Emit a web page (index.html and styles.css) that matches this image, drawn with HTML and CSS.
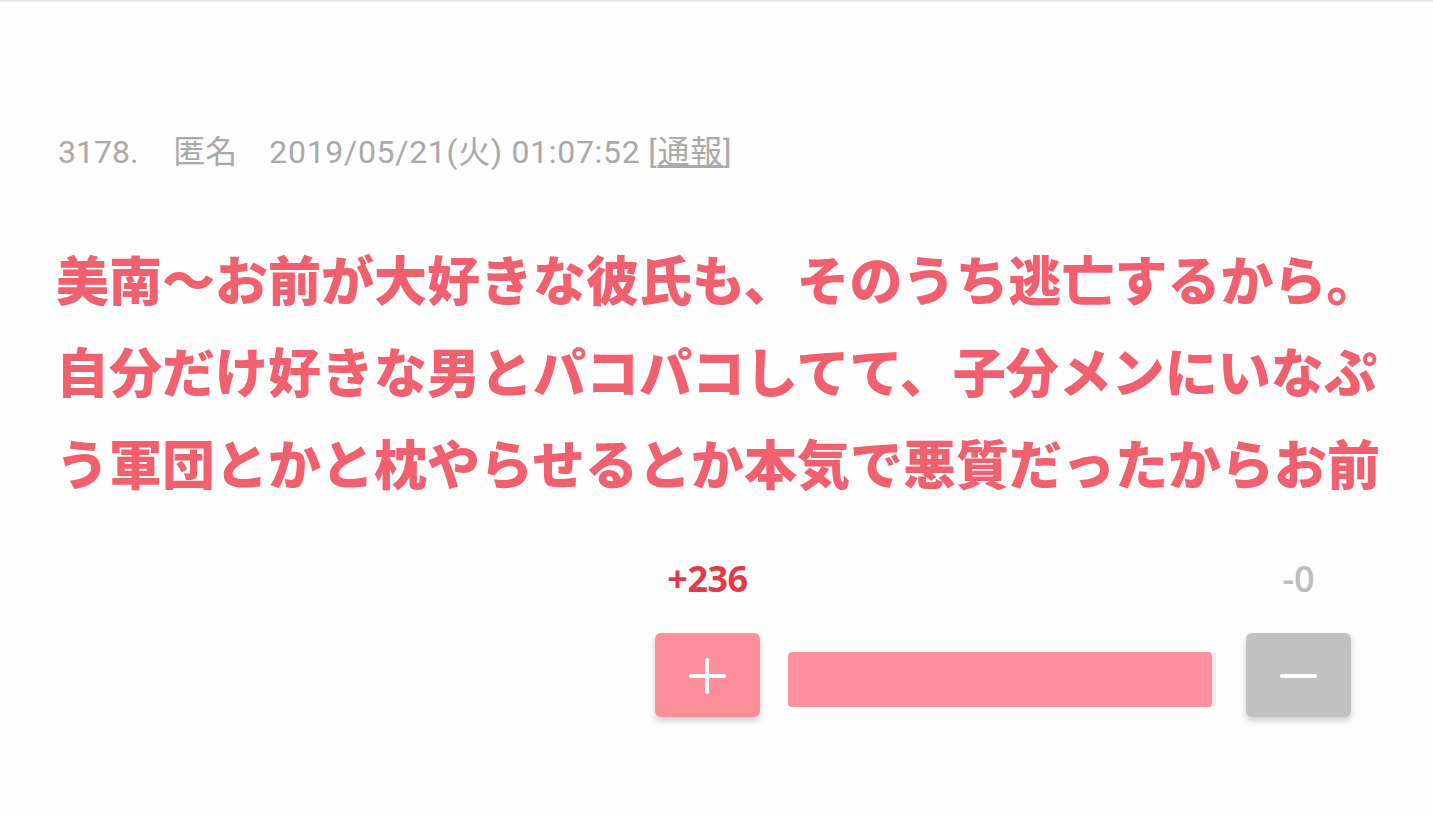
FILE: index.html
```html
<!DOCTYPE html>
<html lang="ja">
  <head>
    <meta charset="utf-8" />
    <meta name="viewport" content="width=device-width, initial-scale=1" />
    <title>3178. 匿名</title>
    <link rel="stylesheet" href="styles.css">
  </head>
  <body>
    <div class="comment">
      <div class="comment-meta">
        <span class="num">3178.</span>
        <span class="name">匿名</span>
        <span class="date">2019/05/21(火) 01:07:52</span>
        <span class="report">[<a href="#">通報</a>]</span>
      </div>
      <div class="comment-body">
        美南〜お前が大好きな彼氏も、そのうち逃亡するから。自分だけ好きな男とパコパコしてて、子分メンにいなぷう軍団とかと枕やらせるとか本気で悪質だったからお前
      </div>
      <div class="vote">
        <div class="vote-col">
          <div class="count plus">+236</div>
          <button class="btn btn-plus"><span class="sign-h"></span><span class="sign-v"></span></button>
        </div>
        <div class="bar">
          <div class="bar-fill" style="width: 99%"></div>
        </div>
        <div class="vote-col">
          <div class="count minus">-0</div>
          <button class="btn btn-minus"><span class="sign-h"></span></button>
        </div>
      </div>
    </div>
  </body>
</html>
```

FILE: styles.css
```css
html,
body {
  margin: 0;
  padding: 0;
  background: #fdfdfd;
}
body {
  height: 817px;
  overflow: hidden;
  box-shadow: inset 0 3px 2px -2px #d8d8d8;
}
.comment {
  padding: 132px 0 0 56px;
}
.comment-meta {
  font-family: Roboto, "Noto Sans CJK JP", sans-serif;
  font-size: 32px;
  line-height: 40px;
  color: #a9a9a9;
  white-space: nowrap;
  padding-left: 2px;
}
.comment-meta .num {
  margin-right: 27px;
}
.comment-meta .name {
  margin-right: 24px;
}
.comment-meta .date,
.comment-meta .report {
  letter-spacing: 0.7px;
}
.comment-meta .report a {
  color: #a9a9a9;
  text-decoration: underline;
}
.comment-body {
  margin-top: 60px;
  width: 1330px;
  font-family: "Noto Sans CJK JP", sans-serif;
  font-size: 53px;
  font-weight: 900;
  line-height: 92px;
  color: #f0606f;
  height: 276px;
  overflow: hidden;
}
.vote {
  display: flex;
  align-items: flex-end;
  margin-top: 51px;
  padding-left: 599px;
}
.vote-col {
  display: flex;
  flex-direction: column;
  align-items: center;
  width: 105px;
}
.count {
  font-family: "Open Sans", sans-serif;
  font-size: 36px;
  line-height: 40px;
  height: 40px;
  margin-bottom: 34px;
}
.count.plus {
  color: #e13a4b;
  font-weight: 700;
  letter-spacing: -0.5px;
}
.count.minus {
  color: #bdbdbd;
  font-weight: 600;
}
.btn {
  position: relative;
  width: 105px;
  height: 84px;
  border: none;
  border-radius: 6px;
  padding: 0;
  cursor: pointer;
  box-shadow: 0 4px 6px rgba(0, 0, 0, 0.18);
}
.btn-plus {
  background: #fd8f9b;
}
.btn-minus {
  background: #c1c1c1;
}
.sign-h,
.sign-v {
  position: absolute;
  background: #fff;
  border-radius: 2px;
}
.sign-h {
  width: 37px;
  height: 4px;
  left: 34px;
  top: 41px;
}
.sign-v {
  width: 4px;
  height: 36px;
  left: 50px;
  top: 25px;
}
.bar {
  width: 428px;
  height: 55px;
  margin: 0 30px 10px 28px;
  background: #ececec;
  border-radius: 4px;
  overflow: hidden;
}
.bar-fill {
  height: 100%;
  background: #fd919d;
  border-radius: 4px;
}
```
